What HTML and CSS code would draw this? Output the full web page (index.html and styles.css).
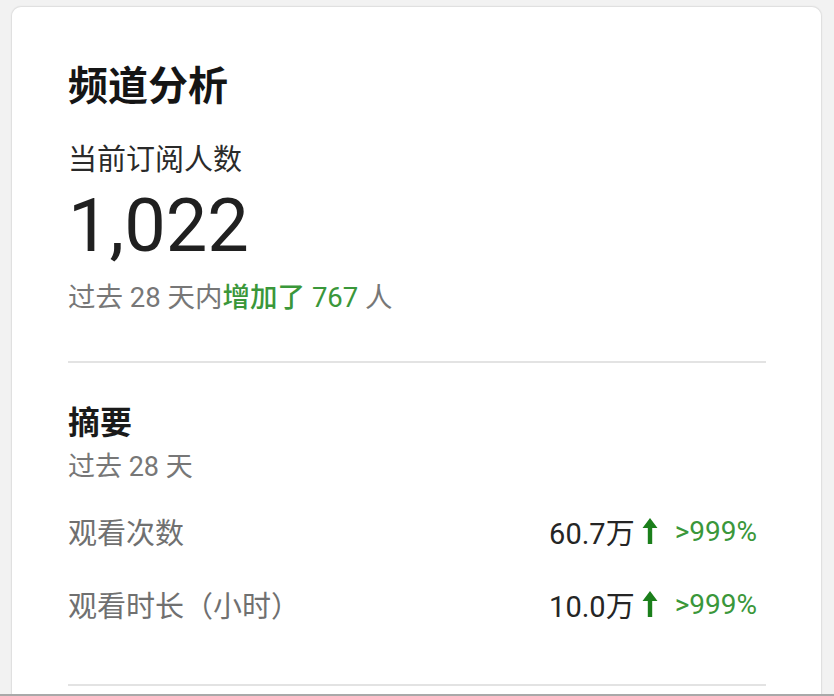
FILE: index.html
```html
<!DOCTYPE html>
<html lang="zh-CN">
<head>
<meta charset="utf-8">
<title>频道分析</title>
<link rel="stylesheet" href="styles.css">
</head>
<body>
<div class="page">
  <section class="card">
    <h1 class="title">频道分析</h1>
    <div class="subtitle">当前订阅人数</div>
    <div class="big">1,022</div>
    <div class="delta">过去 28 天内<span class="up"><span class="up-word">增加了</span> 767</span> 人</div>
    <hr class="divider divider-top">
    <h2 class="section">摘要</h2>
    <div class="period">过去 28 天</div>
    <div class="row row-first">
      <span class="label">观看次数</span>
      <span class="value">60.7万<svg class="arrow" viewBox="0 0 16 28" width="16" height="28"><path d="M8 1 L15.5 11 H10.2 V27 H5.8 V11 H0.5 Z" fill="#1b7f1b"/></svg><span class="pct">&gt;999%</span></span>
    </div>
    <div class="row row-second">
      <span class="label">观看时长（小时）</span>
      <span class="value">10.0万<svg class="arrow" viewBox="0 0 16 28" width="16" height="28"><path d="M8 1 L15.5 11 H10.2 V27 H5.8 V11 H0.5 Z" fill="#1b7f1b"/></svg><span class="pct">&gt;999%</span></span>
    </div>
    <hr class="divider divider-bottom">
  </section>
  <div class="edge"></div>
</div>
</body>
</html>
```

FILE: styles.css
```css
html, body {
  margin: 0;
  padding: 0;
}
body {
  background: #f2f2f2;
  font-family: Roboto, "Noto Sans CJK SC", sans-serif;
  width: 834px;
  height: 696px;
  overflow: hidden;
}
.page {
  display: flex;
  flex-direction: column;
  height: 696px;
}
.card {
  flex: 1;
  margin: 6px 12px 0 11px;
  background: #fff;
  border: 1px solid #e0e0e0;
  border-bottom: none;
  border-radius: 10px 10px 0 0;
  padding: 48px 55px 0 56px;
  overflow: hidden;
  box-shadow: 0 0 2px rgba(0,0,0,0.06);
}
.edge {
  height: 2px;
  background: #a9a9a9;
}
.title {
  margin: 0;
  font-size: 40px;
  line-height: 56px;
  font-weight: 700;
  color: #151515;
  font-family: "Noto Sans CJK SC", sans-serif;
}
.subtitle {
  margin-top: 26px;
  font-size: 29px;
  line-height: 40px;
  color: #2a2a2a;
  font-family: "Noto Sans CJK SC", sans-serif;
}
.big {
  margin-top: 11px;
  font-size: 74px;
  line-height: 76px;
  color: #202020;
  font-family: Roboto, sans-serif;
}
.delta {
  margin-top: 16px;
  font-size: 27.5px;
  line-height: 36px;
  color: #777;
}
.up {
  color: #3a973a;
}
.up-word {
  font-weight: 500;
}
.divider {
  margin: 0;
  border: none;
  height: 2px;
  background: #e3e3e3;
}
.divider-top {
  margin-top: 45px;
}
.section {
  margin: 35px 0 0;
  font-size: 32px;
  line-height: 44px;
  font-weight: 700;
  color: #1a1a1a;
  font-family: "Noto Sans CJK SC", sans-serif;
}
.period {
  margin-top: 7px;
  font-size: 27px;
  line-height: 36px;
  color: #777;
}
.row {
  display: flex;
  justify-content: space-between;
  align-items: center;
  height: 40px;
  padding-right: 9px;
}
.row-first {
  margin-top: 26px;
}
.row-second {
  margin-top: 33px;
}
.label {
  font-size: 29px;
  color: #707070;
}
.value {
  display: flex;
  align-items: center;
  font-size: 29px;
  color: #252525;
}
.arrow {
  margin: 0 17px 0 7px;
}
.pct {
  color: #3a973a;
  font-size: 28px;
}
.divider-bottom {
  margin-top: 60px;
}
```
